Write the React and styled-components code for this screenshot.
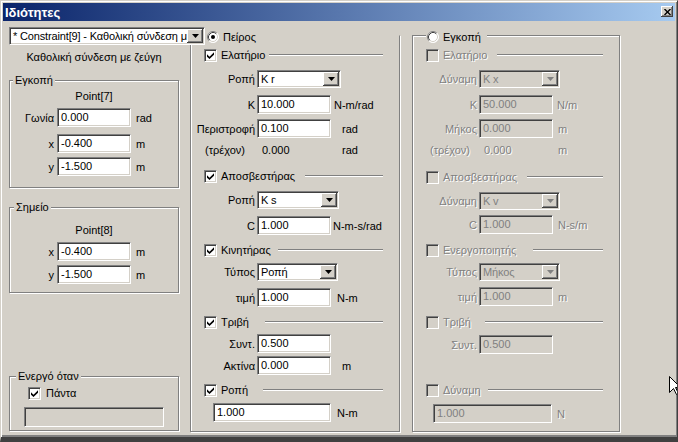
import React from "react";
import styled, { createGlobalStyle } from "styled-components";

const GlobalStyle = createGlobalStyle`
  html, body {
    margin: 0;
    padding: 0;
    background: #d4d0c8;
  }
  body {
    font-family: "Liberation Sans", Arial, sans-serif;
    font-size: 11px;
    color: #000;
  }
`;

const Window = styled.div`
  position: relative;
  box-sizing: border-box;
  width: 678px;
  height: 442px;
  display: flex;
  flex-direction: column;
  background: #d4d0c8;
  border: 1px solid;
  border-color: #d4d0c8 #404040 #404040 #d4d0c8;
  border-bottom-width: 5px;
  padding: 2px;
  box-shadow: inset 1px 1px #fff, inset -1px -1px #808080, inset 0 -2px #808080;
  overflow: hidden;
`;

const TitleBar = styled.div`
  height: 18px;
  flex: none;
  display: flex;
  align-items: center;
  justify-content: space-between;
  padding: 0 2px 0 2px;
  background: linear-gradient(to right, #0a246a, #a6caf0);
`;

const TitleText = styled.span`
  color: #fff;
  font-weight: bold;
  font-size: 13px;
`;

const CloseButton = styled.div`
  width: 12px;
  height: 11px;
  margin-top: -1px;
  display: flex;
  align-items: center;
  justify-content: center;
  background: #d4d0c8;
  box-shadow: inset -1px -1px #404040, inset 1px 1px #fff, inset -2px -2px #808080;
`;

const Body = styled.div`
  flex: 1;
  display: flex;
  padding-left: 6px;
`;

const LeftColumn = styled.div`
  width: 170px;
  display: flex;
  flex-direction: column;
`;

const Sunken = styled.div`
  box-sizing: border-box;
  border: 1px solid;
  border-color: #808080 #fff #fff #808080;
  box-shadow: inset 1px 1px #404040, inset -1px -1px #d4d0c8;
  background: ${(p) => (p.$disabled ? "#d4d0c8" : "#fff")};
  color: ${(p) => (p.$disabled ? "#808080" : "#000")};
`;

const Edit = styled(Sunken)`
  width: ${(p) => p.$w || 74}px;
  height: ${(p) => p.$h || 19}px;
  margin-left: ${(p) => p.$ml || 0}px;
  padding: 0 3px;
  line-height: 17px;
  white-space: nowrap;
  overflow: hidden;
`;

const Combo = styled(Sunken)`
  width: ${(p) => p.$w || 82}px;
  height: 18px;
  padding: 1px;
  display: flex;
  position: ${(p) => (p.$lifted ? "relative" : "static")};
  z-index: ${(p) => (p.$lifted ? 1 : "auto")};
  margin-top: ${(p) => p.$mt || 0}px;
`;

const ComboText = styled.div`
  flex: 1;
  padding-left: 2px;
  line-height: 14px;
  letter-spacing: -0.15px;
  white-space: nowrap;
  overflow: hidden;
`;

const ComboButton = styled.div`
  width: 16px;
  height: 14px;
  flex: none;
  display: flex;
  align-items: center;
  justify-content: center;
  background: #d4d0c8;
  box-shadow: inset -1px -1px #404040, inset 1px 1px #fff, inset -2px -2px #808080;
`;

const Caption = styled.div`
  height: 14px;
  line-height: 14px;
  margin-top: ${(p) => p.$mt || 0}px;
  text-align: center;
`;

const Group = styled.div`
  position: relative;
  box-sizing: border-box;
  width: 170px;
  height: ${(p) => p.$h}px;
  margin-top: ${(p) => p.$mt}px;
  border: 1px solid #808080;
  box-shadow: inset 1px 1px #fff, 1px 1px #fff;
  display: flex;
  flex-direction: column;
`;

const GroupTitle = styled.span`
  position: absolute;
  top: -7px;
  left: ${(p) => p.$left || 4}px;
  padding: 0 2px;
  line-height: 13px;
  background: #d4d0c8;
`;

const Row = styled.div`
  display: flex;
  align-items: center;
  height: ${(p) => p.$h || 19}px;
  margin-top: ${(p) => p.$mt || 0}px;
  padding-left: ${(p) => p.$pl || 0}px;
`;

const FieldLabel = styled.span`
  box-sizing: border-box;
  width: ${(p) => p.$w}px;
  margin-right: ${(p) => (p.$gap === undefined ? 2 : p.$gap)}px;
  padding-right: ${(p) => p.$pr || 0}px;
  text-align: right;
  white-space: nowrap;
  color: ${(p) => (p.$disabled ? "#808080" : "#000")};
  text-shadow: ${(p) => (p.$disabled ? "1px 1px 0 #fff" : "none")};
`;

const Unit = styled.span`
  margin-left: ${(p) => p.$ml || 5}px;
  white-space: nowrap;
  color: ${(p) => (p.$disabled ? "#808080" : "#000")};
  text-shadow: ${(p) => (p.$disabled ? "1px 1px 0 #fff" : "none")};
`;

const StaticValue = styled.span`
  box-sizing: border-box;
  width: 74px;
  padding-left: 5px;
  color: ${(p) => (p.$disabled ? "#808080" : "#000")};
  text-shadow: ${(p) => (p.$disabled ? "1px 1px 0 #fff" : "none")};
`;

const Frame = styled.div`
  box-sizing: border-box;
  width: ${(p) => p.$w}px;
  height: 397px;
  margin-top: 14px;
  margin-left: ${(p) => p.$ml}px;
  border: 1px solid #808080;
  border-top-color: ${(p) => (p.$noTop ? "transparent" : "#808080")};
  box-shadow: ${(p) =>
    p.$noTop ? "inset 1px 0 #fff, 1px 1px #fff" : "inset 1px 1px #fff, 1px 1px #fff"};
  display: flex;
  flex-direction: column;
`;

const Legend = styled.div`
  align-self: flex-start;
  height: 14px;
  margin-top: -6px;
  margin-left: ${(p) => p.$ml}px;
  padding: 0 6px 0 1px;
  display: flex;
  align-items: center;
  gap: 4px;
  background: #d4d0c8;
`;

const Head = styled.div`
  box-sizing: border-box;
  display: flex;
  align-items: center;
  height: 14px;
  width: ${(p) => p.$end}px;
  margin-top: ${(p) => p.$mt || 0}px;
  padding-left: 13px;
`;

const HeadPart = styled.div`
  width: ${(p) => p.$w - 13}px;
  display: flex;
  align-items: center;
  gap: 4px;
  white-space: nowrap;
  color: ${(p) => (p.$disabled ? "#808080" : "#000")};
  text-shadow: ${(p) => (p.$disabled ? "1px 1px 0 #fff" : "none")};
`;

const HeadLine = styled.div`
  flex: 1;
  height: 0;
  border-top: 1px solid #808080;
  border-bottom: 1px solid #fff;
`;

const CheckBoxBox = styled(Sunken)`
  width: 13px;
  height: 13px;
  flex: none;
  display: flex;
  align-items: center;
  justify-content: center;
`;

const Cursor = styled.svg`
  position: absolute;
  left: 668px;
  top: 375px;
`;

const Arrow = ({ disabled }) => (
  <svg width="7" height="4" viewBox="0 0 7 4">
    <path d="M0 0 H7 L3.5 4 Z" fill={disabled ? "#808080" : "#000"} />
  </svg>
);

const ComboBox = ({ value, w, disabled, lifted, mt }) => (
  <Combo $w={w} $disabled={disabled} $lifted={lifted} $mt={mt}>
    <ComboText>{value}</ComboText>
    <ComboButton>
      <Arrow disabled={disabled} />
    </ComboButton>
  </Combo>
);

const Check = ({ checked, disabled }) => (
  <CheckBoxBox $disabled={disabled}>
    {checked && (
      <svg width="7" height="7" viewBox="0 0 7 7">
        <path d="M0 2.3 L2.5 4.8 L7 0.3 V2.7 L2.5 7 L0 4.7 Z" fill="#000" />
      </svg>
    )}
  </CheckBoxBox>
);

const Radio = ({ checked }) => (
  <svg width="12" height="12" viewBox="0 0 12 12">
    <circle cx="6" cy="6" r="5.5" fill="#fff" />
    <path d="M2.11 9.89 A5.5 5.5 0 0 1 9.89 2.11" stroke="#808080" fill="none" />
    <path d="M9.89 2.11 A5.5 5.5 0 0 1 2.11 9.89" stroke="#fff" fill="none" />
    <path d="M2.82 9.18 A4.5 4.5 0 0 1 9.18 2.82" stroke="#404040" fill="none" />
    <path d="M9.18 2.82 A4.5 4.5 0 0 1 2.82 9.18" stroke="#d4d0c8" fill="none" />
    {checked && <circle cx="6" cy="6" r="2" fill="#000" />}
  </svg>
);

const Section = ({ label, w, end, mt, checked, disabled }) => (
  <Head $end={end} $mt={mt}>
    <HeadPart $w={w} $disabled={disabled}>
      <Check checked={checked} disabled={disabled} />
      {label}
    </HeadPart>
    <HeadLine />
  </Head>
);

const Field = ({ label, value, unit, ml, mt, disabled, lw = 64 }) => (
  <Row $mt={mt}>
    <FieldLabel $w={lw} $disabled={disabled}>{label}</FieldLabel>
    <Edit $disabled={disabled}>{value}</Edit>
    {unit && <Unit $ml={ml} $disabled={disabled}>{unit}</Unit>}
  </Row>
);

const ComboField = ({ label, value, w, mt, disabled }) => (
  <Row $h={18} $mt={mt}>
    <FieldLabel $w={64} $disabled={disabled}>{label}</FieldLabel>
    <ComboBox value={value} w={w} disabled={disabled} />
  </Row>
);

const LeftField = ({ label, value, unit, mt }) => (
  <Row $mt={mt}>
    <FieldLabel $w={44} $gap={3}>{label}</FieldLabel>
    <Edit>{value}</Edit>
    <Unit $ml={5}>{unit}</Unit>
  </Row>
);

const App = () => {
  return (
    <>
      <GlobalStyle />
      <Window>
        <TitleBar>
          <TitleText>Ιδιότητες</TitleText>
          <CloseButton>
            <svg width="7" height="6" viewBox="0 0 7 6">
              <path d="M0.5 0 L6.5 6 M6.5 0 L0.5 6" stroke="#000" strokeWidth="1.4" />
            </svg>
          </CloseButton>
        </TitleBar>
        <Body>
          <LeftColumn>
            <ComboBox value="* Constraint[9] - Καθολική σύνδεση με ζεύγη" w={196} lifted mt={6} />
            <Caption $mt={5}>Καθολική σύνδεση με ζεύγη</Caption>

            <Group $h={108} $mt={16}>
              <GroupTitle $left={3}>Εγκοπή</GroupTitle>
              <Caption $mt={8}>Point[7]</Caption>
              <LeftField label="Γωνία" value="0.000" unit="rad" mt={5} />
              <LeftField label="x" value="-0.400" unit="m" mt={7} />
              <LeftField label="y" value="-1.500" unit="m" mt={4} />
            </Group>

            <Group $h={86} $mt={19}>
              <GroupTitle>Σημείο</GroupTitle>
              <Caption $mt={15}>Point[8]</Caption>
              <LeftField label="x" value="-0.400" unit="m" mt={5} />
              <LeftField label="y" value="-1.500" unit="m" mt={4} />
            </Group>

            <Group $h={55} $mt={83}>
              <GroupTitle $left={6}>Ενεργό όταν</GroupTitle>
              <Row $h={14} $mt={9} $pl={18}>
                <Check checked />
                <Unit $ml={5}>Πάντα</Unit>
              </Row>
              <Row $h={20} $mt={7} $pl={14}>
                <Edit $w={140} $h={20} $disabled />
              </Row>
            </Group>
          </LeftColumn>

          <Frame $w={210} $ml={11} $noTop>
            <Legend $ml={15}>
              <Radio checked />
              Πείρος
            </Legend>
            <Section label="Ελατήριο" w={78} end={192} mt={4} checked />
            <ComboField label="Ροπή" value="K r" w={84} mt={8} />
            <Field label="K" value="10.000" unit="N-m/rad" ml={3} mt={7} />
            <Field label="Περιστροφή" value="0.100" unit="rad" ml={11} mt={5} />
            <Row $h={14} $mt={5}>
              <FieldLabel $w={64} $pr={10}>(τρέχον)</FieldLabel>
              <StaticValue>0.000</StaticValue>
              <Unit $ml={11}>rad</Unit>
            </Row>
            <Section label="Αποσβεστήρας" w={114} end={192} mt={12} checked />
            <ComboField label="Ροπή" value="K s" w={82} mt={8} />
            <Field label="C" value="1.000" unit="N-m-s/rad" ml={2} mt={7} />
            <Section label="Κινητήρας" w={87} end={192} mt={8} checked />
            <ComboField label="Τύπος" value="Ροπή" w={81} mt={6} />
            <Field label="τιμή" value="1.000" unit="N-m" ml={6} mt={7} />
            <Section label="Τριβή" w={74} end={192} mt={8} checked />
            <Field label="Συντ." value="0.500" mt={5} />
            <Field label="Ακτίνα" value="0.000" unit="m" ml={11} mt={3} />
            <Section label="Ροπή" w={72} end={192} mt={8} checked />
            <Row $mt={6} $pl={22}>
              <Edit $w={118}>1.000</Edit>
              <Unit $ml={6}>N-m</Unit>
            </Row>
          </Frame>

          <Frame $w={208} $ml={12}>
            <Legend $ml={13}>
              <Radio />
              Εγκοπή
            </Legend>
            <Section label="Ελατήριο" w={84} end={190} mt={4} disabled />
            <ComboField label="Δύναμη" value="K x" w={81} mt={8} disabled />
            <Field label="K" value="50.000" unit="N/m" ml={4} mt={7} disabled />
            <Field label="Μήκος" value="0.000" unit="m" ml={5} mt={5} disabled />
            <Row $h={14} $mt={5}>
              <FieldLabel $w={64} $pr={7} $disabled>(τρέχον)</FieldLabel>
              <StaticValue $disabled>0.000</StaticValue>
              <Unit $ml={5} $disabled>m</Unit>
            </Row>
            <Section label="Αποσβεστήρας" w={114} end={190} mt={13} disabled />
            <ComboField label="Δύναμη" value="K v" w={81} mt={8} disabled />
            <Field label="C" value="1.000" unit="N-s/m" ml={5} mt={5} disabled />
            <Section label="Ενεργοποιητής" w={120} end={190} mt={9} disabled />
            <ComboField label="Τύπος" value="Μήκος" w={81} mt={6} disabled />
            <Field label="τιμή" value="1.000" unit="m" ml={5} mt={6} disabled />
            <Section label="Τριβή" w={72} end={190} mt={9} disabled />
            <Field label="Συντ." value="0.500" mt={6} disabled />
            <Section label="Δύναμη" w={75} end={190} mt={29} disabled />
            <Row $mt={7} $pl={20}>
              <Edit $w={119} $disabled>1.000</Edit>
              <Unit $ml={5} $disabled>N</Unit>
            </Row>
          </Frame>
        </Body>
        <Cursor width="12" height="20" viewBox="0 0 12 20">
          <path
            d="M0.5 0.5 V16.5 L4.5 12.5 L7.5 18.5 L9.5 17.5 L6.5 11.5 H11.5 Z"
            fill="#fff"
            stroke="#000"
            strokeWidth="1"
          />
        </Cursor>
      </Window>
    </>
  );
};

export default App;
